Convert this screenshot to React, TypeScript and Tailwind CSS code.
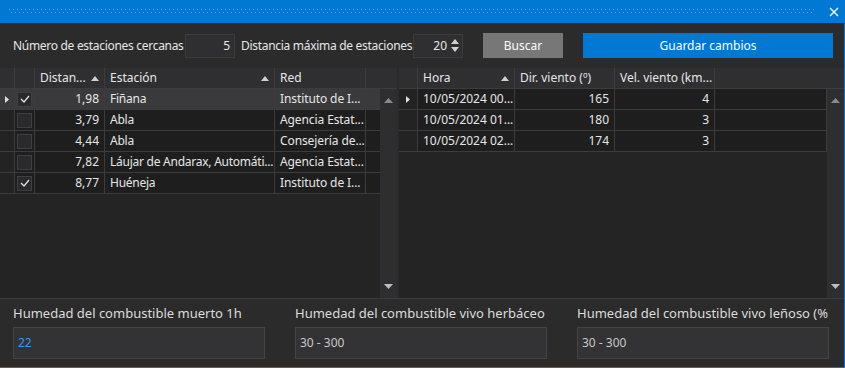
import React from "react";

const font = { fontFamily: '"Noto Sans", "Open Sans", sans-serif' };

function SortUp() {
  return (
    <svg width="8" height="5" viewBox="0 0 8 5" className="shrink-0">
      <path d="M0 5 L4 0 L8 5 Z" fill="#d0d0d0" />
    </svg>
  );
}

function RowArrow() {
  return (
    <svg width="4" height="7" viewBox="0 0 4 7" className="shrink-0">
      <path d="M0 0 L4 3.5 L0 7 Z" fill="#e0e0e0" />
    </svg>
  );
}

function Check({ on }: { on: boolean }) {
  return (
    <div className="w-[15px] h-[15px] shrink-0 border border-[#3f3f42] bg-[#2a2a2c] flex items-center justify-center">
      {on && (
        <svg width="10" height="8" viewBox="0 0 10 8">
          <path d="M1 4 L4 7 L9 1" stroke="#e0e0e0" strokeWidth="1.3" fill="none" />
        </svg>
      )}
    </div>
  );
}

function ScrollBar() {
  return (
    <div className="w-[17px] shrink-0 bg-[#2e2e31] flex flex-col justify-between items-center py-[9px]">
      <svg width="9" height="5" viewBox="0 0 9 5">
        <path d="M0 5 L4.5 0 L9 5 Z" fill="#8a8a8a" />
      </svg>
      <svg width="9" height="5" viewBox="0 0 9 5">
        <path d="M0 0 L4.5 5 L9 0 Z" fill="#bdbdbd" />
      </svg>
    </div>
  );
}

const stations = [
  { sel: true, check: true, dist: "1,98", name: "Fiñana", red: "Instituto de I..." },
  { sel: false, check: false, dist: "3,79", name: "Abla", red: "Agencia Estat..." },
  { sel: false, check: false, dist: "4,44", name: "Abla", red: "Consejería de..." },
  { sel: false, check: false, dist: "7,82", name: "Láujar de Andarax, Automáti...", red: "Agencia Estat..." },
  { sel: false, check: true, dist: "8,77", name: "Huéneja", red: "Instituto de I..." },
];

const wind = [
  { hora: "10/05/2024 00...", dir: "165", vel: "4" },
  { hora: "10/05/2024 01...", dir: "180", vel: "3" },
  { hora: "10/05/2024 02...", dir: "174", vel: "3" },
];

// base cell without padding, text cells add px
const box = "h-[21px] shrink-0 border-r border-b border-[#3c3c3f] flex items-center";
const txt = `${box} px-[5px] whitespace-nowrap overflow-hidden`;

function LeftGrid() {
  return (
    <div className="w-[397px] shrink-0 flex flex-col bg-[#242424]">
      <div className="flex bg-[#2f2f32] text-[#e6e6e6]">
        <div className={`${box} w-[15px]`} />
        <div className={`${box} w-[20px]`} />
        <div className={`${txt} w-[70px] justify-between`}>
          <span>Distan...</span>
          <SortUp />
        </div>
        <div className={`${txt} w-[170px] justify-between`}>
          <span>Estación</span>
          <SortUp />
        </div>
        <div className={`${txt} w-[91px]`}>Red</div>
        <div className="h-[21px] border-b border-[#3c3c3f] flex-1" />
      </div>
      <div className="flex flex-1">
        <div className="w-[380px] flex flex-col">
          {stations.map((s, i) => (
            <div key={i} className={`flex ${s.sel ? "bg-[#3a3a3c]" : "bg-[#1e1e1f]"} text-[#e6e6e6]`}>
              <div className={`${box} w-[15px] justify-center ${s.sel ? "" : "bg-[#232324]"}`}>
                {s.sel && <RowArrow />}
              </div>
              <div className={`${box} w-[20px] justify-center`}>
                <Check on={s.check} />
              </div>
              <div className={`${txt} w-[70px] justify-end`}>{s.dist}</div>
              <div className={`${txt} w-[170px] tracking-[-0.25px]`}>{s.name}</div>
              <div className={`${txt} w-[91px] tracking-[-0.1px]`}>{s.red}</div>
              <div className="h-[21px] border-b border-[#3c3c3f] flex-1" />
            </div>
          ))}
        </div>
        <ScrollBar />
      </div>
    </div>
  );
}

function RightGrid() {
  return (
    <div className="flex-1 flex flex-col bg-[#242424]">
      <div className="flex bg-[#2f2f32] text-[#e6e6e6]">
        <div className={`${box} w-[19px]`} />
        <div className={`${txt} w-[97px] justify-between`}>
          <span>Hora</span>
          <SortUp />
        </div>
        <div className={`${txt} w-[100px]`}>Dir. viento (º)</div>
        <div className={`${txt} w-[100px]`}>Vel. viento (km...</div>
        <div className="h-[21px] border-b border-[#3c3c3f] flex-1" />
      </div>
      <div className="flex flex-1">
        <div className="flex-1 flex flex-col">
          {wind.map((w, i) => (
            <div key={i} className="flex bg-[#1e1e1f] text-[#e6e6e6]">
              <div className={`${box} w-[19px] justify-center bg-[#232324]`}>
                {i === 0 && <RowArrow />}
              </div>
              <div className={`${txt} w-[97px]`}>{w.hora}</div>
              <div className={`${txt} w-[100px] justify-end`}>{w.dir}</div>
              <div className={`${txt} w-[100px] justify-end`}>{w.vel}</div>
              <div className="h-[21px] border-r border-b border-[#3c3c3f] flex-1" />
            </div>
          ))}
        </div>
        <ScrollBar />
      </div>
    </div>
  );
}

function Field({ label, value, blue }: { label: string; value: string; blue?: boolean }) {
  return (
    <div className="w-[252px] shrink-0 flex flex-col">
      <div className="text-[13px] text-[#dcdcdc] h-[27px] flex items-center whitespace-nowrap overflow-hidden">
        {label}
      </div>
      <div
        className={`h-[32px] border border-[#444447] bg-[#333336] flex items-center px-[4px] text-[12px] ${
          blue ? "text-[#2d9cf0]" : "text-[#c8c8c8]"
        }`}
      >
        {value}
      </div>
    </div>
  );
}

export default function App() {
  return (
    <div
      className="w-[845px] h-[368px] bg-[#2b2b2b] border-r border-b border-[#0078d4] flex flex-col overflow-hidden text-[12px]"
      style={font}
    >
      <div className="h-[23px] bg-[#0078d4] flex items-center pl-[9px] pr-[5px] shrink-0">
        <div
          className="flex-1 h-[5px] mr-[14px]"
          style={{
            backgroundImage:
              "radial-gradient(circle at 0.5px 0.5px, rgba(100,175,240,0.9) 0.6px, transparent 0.7px), radial-gradient(circle at 2.5px 3.5px, rgba(100,175,240,0.9) 0.6px, transparent 0.7px)",
            backgroundSize: "4px 5px",
          }}
        />
        <svg width="10" height="10" viewBox="0 0 10 10">
          <path d="M1 1 L9 9 M9 1 L1 9" stroke="#ffffff" strokeWidth="1.4" />
        </svg>
      </div>

      <div className="flex items-center h-[25px] mt-[10px] pl-[13px] text-[#e6e6e6] shrink-0 whitespace-nowrap">
        <span className="w-[172px] tracking-[-0.3px]">Número de estaciones cercanas</span>
        <div className="w-[50px] h-[24px] border border-[#3c3c3f] bg-[#2f2f31] flex items-center justify-end pr-[4px]">
          5
        </div>
        <span className="w-[178px] pl-[6px] tracking-[-0.3px]">Distancia máxima de estaciones</span>
        <div className="w-[50px] h-[24px] border border-[#3c3c3f] bg-[#2f2f31] flex items-center justify-end pr-[3px] gap-[4px]">
          <span>20</span>
          <div className="flex flex-col gap-[3px]">
            <svg width="8" height="5" viewBox="0 0 8 5">
              <path d="M0 5 L4 0 L8 5 Z" fill="#d0d0d0" />
            </svg>
            <svg width="8" height="5" viewBox="0 0 8 5">
              <path d="M0 0 L4 5 L8 0 Z" fill="#d0d0d0" />
            </svg>
          </div>
        </div>
        <button className="w-[80px] h-[25px] bg-[#777777] text-white ml-[20px]">Buscar</button>
        <button className="w-[250px] h-[25px] bg-[#0078d4] text-white ml-[20px]">Guardar cambios</button>
      </div>

      <div className="flex mt-[10px] h-[230px] shrink-0">
        <LeftGrid />
        <div className="w-[2px] shrink-0 bg-[#2b2b2b]" />
        <RightGrid />
      </div>

      <div className="flex-1 border-t border-[#3c3c3f] flex gap-[30px] pl-[13px] pt-[1px]">
        <Field label="Humedad del combustible muerto 1h" value="22" blue />
        <Field label="Humedad del combustible vivo herbáceo" value="30 - 300" />
        <Field label="Humedad del combustible vivo leñoso (%" value="30 - 300" />
      </div>
    </div>
  );
}
